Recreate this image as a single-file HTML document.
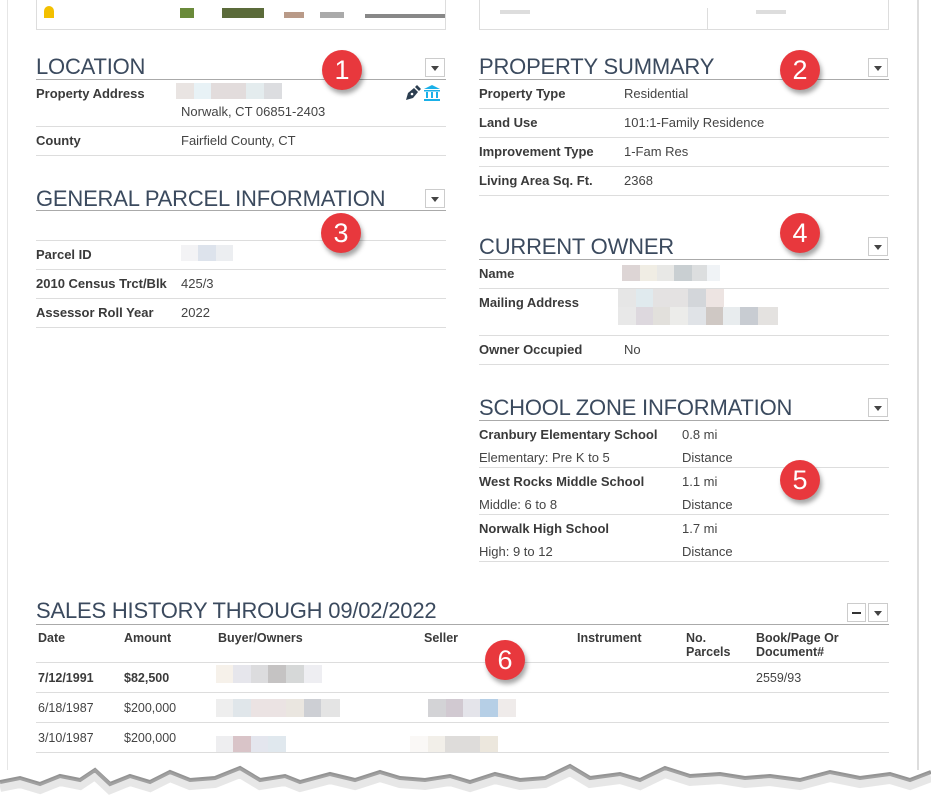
<!DOCTYPE html>
<html><head><meta charset="utf-8"><style>
*{margin:0;padding:0;box-sizing:border-box}
body{width:931px;height:807px;background:#fff;position:relative;overflow:hidden;font-family:"Liberation Sans",Arial,sans-serif;color:#444;font-size:13px}
.a{position:absolute;white-space:nowrap;line-height:16px}
.b{font-weight:bold;color:#3a3a3a}
.h{position:absolute;font-size:22px;color:#3b4a5e;line-height:24px;letter-spacing:-0.2px}
.l{position:absolute;height:1px;background:#ddd}
.hl{position:absolute;height:1px;background:#aaa}
.dd{position:absolute;width:20px;height:19px;border:1px solid #ccc;background:#fff}
.dd:after{content:"";position:absolute;left:5px;top:7px;border-left:4px solid transparent;border-right:4px solid transparent;border-top:5px solid #444}
.mb{position:absolute;width:19px;height:19px;border:1px solid #ccc;background:#fff}
.badge{position:absolute;width:40px;height:40px;border-radius:50%;background:#e8383d;color:#fff;font-size:27px;text-align:center;line-height:40px;box-shadow:2px 4px 5px rgba(0,0,0,.35)}
.px{position:absolute;height:16px}
.s{position:absolute;font-size:12.5px;line-height:14px}
</style></head><body>
<div style="position:absolute;left:7px;top:0;width:1px;height:770px;background:#e6e6e6"></div>
<div style="position:absolute;left:917px;top:0;width:2px;height:770px;background:#ddd"></div>
<!-- top images -->
<div style="position:absolute;left:36px;top:0;width:410px;height:30px;border:1px solid #ddd;border-top:none;background:#fff"></div>
<div style="position:absolute;left:44px;top:6px;width:10px;height:12px;background:#f3c000;border-radius:5px 5px 0 0"></div>
<div style="position:absolute;left:180px;top:8px;width:14px;height:10px;background:#6a8a3a"></div>
<div style="position:absolute;left:222px;top:8px;width:42px;height:10px;background:#5b6b3a"></div>
<div style="position:absolute;left:284px;top:12px;width:20px;height:6px;background:#b99a88"></div>
<div style="position:absolute;left:320px;top:12px;width:24px;height:6px;background:#aaa"></div>
<div style="position:absolute;left:365px;top:14px;width:80px;height:4px;background:#888"></div>
<div style="position:absolute;left:479px;top:0;width:410px;height:30px;border:1px solid #ddd;border-top:none;background:#fff"></div>
<div style="position:absolute;left:500px;top:10px;width:30px;height:4px;background:#ddd"></div>
<div style="position:absolute;left:756px;top:10px;width:30px;height:4px;background:#ddd"></div>
<div style="position:absolute;left:707px;top:8px;width:1px;height:22px;background:#ddd"></div>

<!-- LOCATION -->
<div class="h" style="left:36px;top:55px">LOCATION</div>
<div class="hl" style="left:36px;top:79px;width:410px"></div>
<div class="dd" style="left:425px;top:58px"></div>
<div class="a b" style="left:36px;top:86px">Property Address</div>
<div class="px" style="left:176px;top:83px;width:106px;background:linear-gradient(90deg,#e9e4e2 0 18px,#e8f2f6 18px 35px,#e2dcdc 35px 70px,#e4ecee 70px 88px,#dcdde0 88px)"></div>
<div class="a" style="left:181px;top:104px">Norwalk, CT 06851-2403</div>
<svg style="position:absolute;left:404px;top:84px" width="18" height="18" viewBox="0 0 18 18"><path d="M2,16 L4,9 L10,4 L14,8 L9,14 Z" fill="#2c3e50"/><path d="M11,3 L13,1 L17,5 L15,7 Z" fill="#2c3e50"/><circle cx="8" cy="10" r="1.3" fill="#fff"/></svg>
<svg style="position:absolute;left:423px;top:84px" width="18" height="18" viewBox="0 0 18 18"><path d="M9,1 L17,5 L1,5 Z" fill="#1ab0e8"/><rect x="1" y="6" width="16" height="1.5" fill="#1ab0e8"/><rect x="3" y="8" width="2" height="6" fill="#1ab0e8"/><rect x="8" y="8" width="2" height="6" fill="#1ab0e8"/><rect x="13" y="8" width="2" height="6" fill="#1ab0e8"/><rect x="1" y="15" width="16" height="2" fill="#1ab0e8"/></svg>
<div class="l" style="left:36px;top:126px;width:410px"></div>
<div class="a b" style="left:36px;top:133px">County</div>
<div class="a" style="left:181px;top:133px">Fairfield County, CT</div>
<div class="l" style="left:36px;top:155px;width:410px"></div>

<!-- GENERAL PARCEL -->
<div class="h" style="left:36px;top:187px">GENERAL PARCEL INFORMATION</div>
<div class="hl" style="left:36px;top:210px;width:410px"></div>
<div class="dd" style="left:425px;top:189px"></div>
<div class="l" style="left:36px;top:240px;width:410px"></div>
<div class="a b" style="left:36px;top:247px">Parcel ID</div>
<div class="px" style="left:181px;top:245px;width:52px;background:linear-gradient(90deg,#f3f3f5 0 17px,#dde3ec 17px 35px,#eceef1 35px)"></div>
<div class="l" style="left:36px;top:269px;width:410px"></div>
<div class="a b" style="left:36px;top:276px">2010 Census Trct/Blk</div>
<div class="a" style="left:181px;top:276px">425/3</div>
<div class="l" style="left:36px;top:298px;width:410px"></div>
<div class="a b" style="left:36px;top:305px">Assessor Roll Year</div>
<div class="a" style="left:181px;top:305px">2022</div>
<div class="l" style="left:36px;top:327px;width:410px"></div>

<!-- PROPERTY SUMMARY -->
<div class="h" style="left:479px;top:55px">PROPERTY SUMMARY</div>
<div class="hl" style="left:479px;top:79px;width:410px"></div>
<div class="dd" style="left:868px;top:58px"></div>
<div class="a b" style="left:479px;top:86px">Property Type</div><div class="a" style="left:624px;top:86px">Residential</div>
<div class="l" style="left:479px;top:108px;width:410px"></div>
<div class="a b" style="left:479px;top:115px">Land Use</div><div class="a" style="left:624px;top:115px">101:1-Family Residence</div>
<div class="l" style="left:479px;top:137px;width:410px"></div>
<div class="a b" style="left:479px;top:144px">Improvement Type</div><div class="a" style="left:624px;top:144px">1-Fam Res</div>
<div class="l" style="left:479px;top:166px;width:410px"></div>
<div class="a b" style="left:479px;top:173px">Living Area Sq. Ft.</div><div class="a" style="left:624px;top:173px">2368</div>
<div class="l" style="left:479px;top:195px;width:410px"></div>

<!-- CURRENT OWNER -->
<div class="h" style="left:479px;top:235px">CURRENT OWNER</div>
<div class="hl" style="left:479px;top:259px;width:410px"></div>
<div class="dd" style="left:868px;top:237px"></div>
<div class="a b" style="left:479px;top:266px">Name</div>
<div class="px" style="left:622px;top:265px;width:98px;background:linear-gradient(90deg,#ddd5d5 0 18px,#f0ede4 18px 35px,#e8e8e6 35px 52px,#c9cfd2 52px 70px,#dcdedf 70px 85px,#f0f3f6 85px)"></div>
<div class="l" style="left:479px;top:288px;width:410px"></div>
<div class="a b" style="left:479px;top:295px">Mailing Address</div>
<div class="px" style="left:618px;top:289px;width:106px;height:18px;background:linear-gradient(90deg,#e6e6e6 0 18px,#e0eaee 18px 35px,#e4e2e2 35px 70px,#d3d6da 70px 88px,#ede4e2 88px)"></div>
<div class="px" style="left:618px;top:307px;width:160px;height:18px;background:linear-gradient(90deg,#e8e8e8 0 18px,#ddd8de 18px 35px,#e2e0dc 35px 52px,#ececea 52px 70px,#e0e3e7 70px 88px,#cfc8c4 88px 105px,#e8ecee 105px 122px,#c8ccd2 122px 140px,#e4e2e0 140px)"></div>
<div class="l" style="left:479px;top:335px;width:410px"></div>
<div class="a b" style="left:479px;top:342px">Owner Occupied</div><div class="a" style="left:624px;top:342px">No</div>
<div class="l" style="left:479px;top:364px;width:410px"></div>

<!-- SCHOOL -->
<div class="h" style="left:479px;top:396px">SCHOOL ZONE INFORMATION</div>
<div class="hl" style="left:479px;top:420px;width:410px"></div>
<div class="dd" style="left:868px;top:398px"></div>
<div class="a b" style="left:479px;top:427px">Cranbury Elementary School</div><div class="a" style="left:682px;top:427px">0.8 mi</div>
<div class="a" style="left:479px;top:450px">Elementary: Pre K to 5</div><div class="a" style="left:682px;top:450px">Distance</div>
<div class="l" style="left:479px;top:467px;width:410px"></div>
<div class="a b" style="left:479px;top:474px">West Rocks Middle School</div><div class="a" style="left:682px;top:474px">1.1 mi</div>
<div class="a" style="left:479px;top:497px">Middle: 6 to 8</div><div class="a" style="left:682px;top:497px">Distance</div>
<div class="l" style="left:479px;top:514px;width:410px"></div>
<div class="a b" style="left:479px;top:521px">Norwalk High School</div><div class="a" style="left:682px;top:521px">1.7 mi</div>
<div class="a" style="left:479px;top:544px">High: 9 to 12</div><div class="a" style="left:682px;top:544px">Distance</div>
<div class="l" style="left:479px;top:561px;width:410px"></div>

<!-- SALES -->
<div class="h" style="left:36px;top:599px">SALES HISTORY THROUGH 09/02/2022</div>
<div class="hl" style="left:36px;top:624px;width:853px"></div>
<div class="mb" style="left:847px;top:603px"></div>
<div style="position:absolute;left:852px;top:612px;width:9px;height:2px;background:#333"></div>
<div class="dd" style="left:868px;top:603px"></div>
<div class="s b" style="left:38px;top:631px">Date</div>
<div class="s b" style="left:124px;top:631px">Amount</div>
<div class="s b" style="left:218px;top:631px">Buyer/Owners</div>
<div class="s b" style="left:424px;top:631px">Seller</div>
<div class="s b" style="left:577px;top:631px">Instrument</div>
<div class="s b" style="left:686px;top:631px">No.<br>Parcels</div>
<div class="s b" style="left:756px;top:631px">Book/Page Or<br>Document#</div>
<div class="l" style="left:36px;top:662px;width:853px"></div>
<div class="s b" style="left:38px;top:671px">7/12/1991</div>
<div class="s b" style="left:124px;top:671px">$82,500</div>
<div class="px" style="left:216px;top:665px;width:106px;height:18px;background:linear-gradient(90deg,#f6f1ea 0 17px,#e6e6ec 17px 35px,#dcdcde 35px 52px,#c5c3c3 52px 70px,#d6d8d8 70px 88px,#eeeef2 88px)"></div>
<div class="s" style="left:756px;top:671px">2559/93</div>
<div class="l" style="left:36px;top:692px;width:853px"></div>
<div class="s" style="left:38px;top:701px">6/18/1987</div>
<div class="s" style="left:124px;top:701px">$200,000</div>
<div class="px" style="left:216px;top:699px;width:124px;height:18px;background:linear-gradient(90deg,#eeeeee 0 17px,#e0e6ea 17px 35px,#ebe3e3 35px 70px,#eae6e0 70px 88px,#cdcfd4 88px 105px,#e4e4e4 105px)"></div>
<div class="px" style="left:428px;top:699px;width:88px;height:18px;background:linear-gradient(90deg,#d3d3d6 0 18px,#d1c9d1 18px 35px,#e4e4ea 35px 52px,#b6cfe6 52px 70px,#efebea 70px)"></div>
<div class="l" style="left:36px;top:722px;width:853px"></div>
<div class="s" style="left:38px;top:731px">3/10/1987</div>
<div class="s" style="left:124px;top:731px">$200,000</div>
<div class="px" style="left:216px;top:736px;width:70px;height:16px;background:linear-gradient(90deg,#eeeef0 0 17px,#d9c4c8 17px 35px,#e4e6ee 35px 52px,#e0e8ee 52px)"></div>
<div class="px" style="left:410px;top:736px;width:88px;height:16px;background:linear-gradient(90deg,#faf8f6 0 18px,#f2efe9 18px 35px,#dedcda 35px 70px,#ece7dd 70px)"></div>
<div class="l" style="left:36px;top:752px;width:853px"></div>

<!-- badges -->
<div class="badge" style="left:322px;top:50px">1</div>
<div class="badge" style="left:780px;top:50px">2</div>
<div class="badge" style="left:321px;top:213px">3</div>
<div class="badge" style="left:780px;top:213px">4</div>
<div class="badge" style="left:780px;top:460px">5</div>
<div class="badge" style="left:485px;top:640px">6</div>

<!-- torn bottom -->
<svg style="position:absolute;left:0;top:760px" width="931" height="47">
<path d="M0,22 L20,18 L40,24 L60,16 L80,20 L95,10 L110,24 L130,16 L150,22 L170,12 L190,20 L215,18 L240,8 L260,20 L285,16 L300,22 L330,14 L355,20 L380,12 L400,18 L425,20 L450,16 L470,22 L495,14 L520,20 L545,18 L570,6 L590,18 L620,14 L640,20 L665,8 L690,16 L720,14 L745,18 L770,16 L800,20 L830,12 L860,18 L890,14 L910,20 L931,12" fill="none" stroke="#666" stroke-width="4" opacity=".7"/>
<path d="M0,22 L20,18 L40,24 L60,16 L80,20 L95,10 L110,24 L130,16 L150,22 L170,12 L190,20 L215,18 L240,8 L260,20 L285,16 L300,22 L330,14 L355,20 L380,12 L400,18 L425,20 L450,16 L470,22 L495,14 L520,20 L545,18 L570,6 L590,18 L620,14 L640,20 L665,8 L690,16 L720,14 L745,18 L770,16 L800,20 L830,12 L860,18 L890,14 L910,20 L931,12" fill="none" stroke="#bbb" stroke-width="10" opacity=".35" transform="translate(0,5)"/>
</svg>
</body></html>
